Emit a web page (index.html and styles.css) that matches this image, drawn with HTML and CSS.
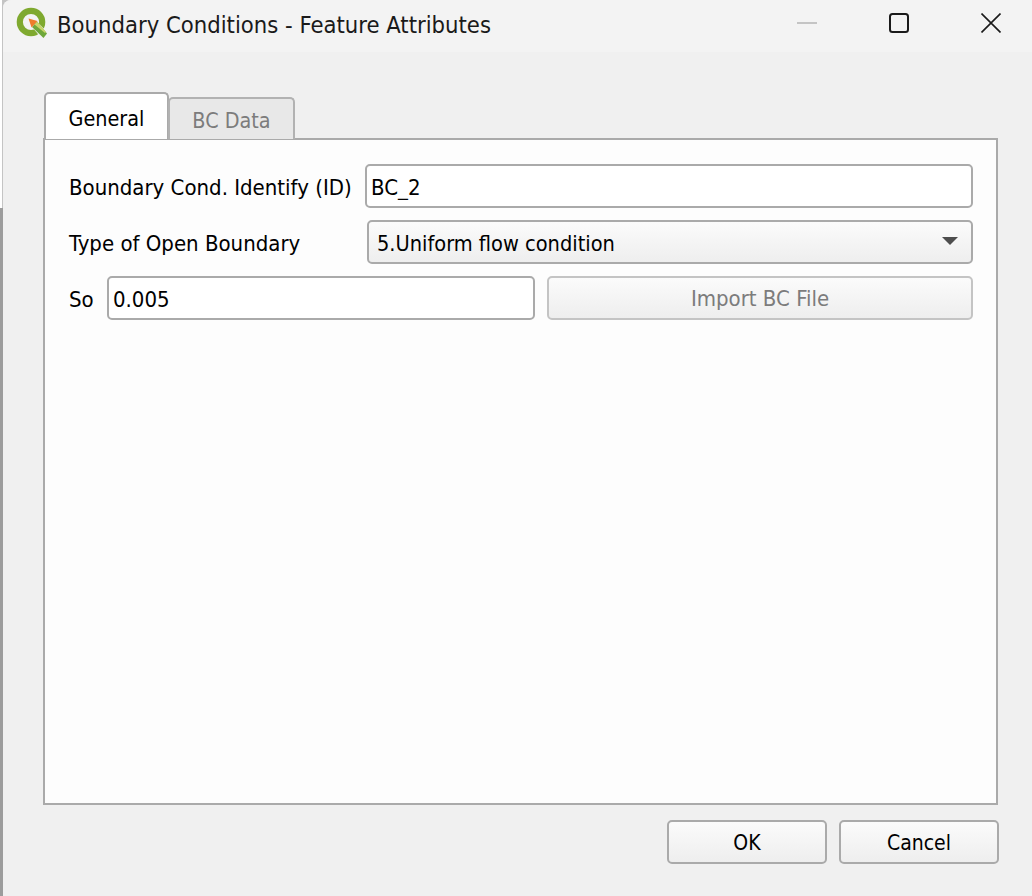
FILE: index.html
```html
<!DOCTYPE html>
<html lang="en">
<head>
    <meta charset="UTF-8">
    <meta name="viewport" content="width=device-width, initial-scale=1.0">
    <title>Boundary Conditions - Feature Attributes</title>
    <link rel="stylesheet" href="styles.css">
</head>
<body>

<div class="window">
    <header class="titlebar">
        <svg class="app-icon" width="32" height="32" viewBox="0 0 32 32">
            <circle cx="15" cy="15" r="11.2" fill="none" stroke="#7fa92f" stroke-width="6.2"/>
            <path d="M16 20 L21 14.5 L33 27 L27 33 Z" fill="#f3f3f3"/>
            <path d="M16 20 L21 14.5 L31 26.5 L27.5 31 Z" fill="#6fa83a"/>
            <path d="M18.5 17.5 L21 14.5 L30 25 L29 26 Z" fill="#c9d56a"/>
            <path d="M12.5 11.5 L21.5 14 L15.5 20.5 Z" fill="#ee7d2b"/>
        </svg>
        <span class="title">Boundary Conditions - Feature Attributes</span>
        <div class="win-controls">
            <svg class="win-btn" width="20" height="20" viewBox="0 0 20 20"><path d="M0 10 H20" stroke="#c4c4c4" stroke-width="2"/></svg>
            <svg class="win-btn" width="20" height="20" viewBox="0 0 20 20"><rect x="1" y="1" width="18" height="18" rx="2.5" fill="none" stroke="#1a1a1a" stroke-width="2"/></svg>
            <svg class="win-btn" width="20" height="20" viewBox="0 0 20 20"><path d="M0.5 0.5 L19.5 19.5 M19.5 0.5 L0.5 19.5" stroke="#1a1a1a" stroke-width="1.6"/></svg>
        </div>
    </header>

    <div class="content">
        <div class="tabs">
            <div class="tab active">General</div>
            <div class="tab">BC Data</div>
        </div>

        <div class="pane">
            <div class="row">
                <label class="label label-id" for="bcId">Boundary Cond. Identify (ID)</label>
                <input class="field" id="bcId" type="text" value="BC_2">
            </div>
            <div class="row">
                <span class="label label-type">Type of Open Boundary</span>
                <div class="combo">
                    <span>5.Uniform flow condition</span>
                    <span class="arrow"></span>
                </div>
            </div>
            <div class="row">
                <label class="label label-so" for="so">So</label>
                <input class="field field-so" id="so" type="text" value="0.005">
                <button class="btn import" disabled>Import BC File</button>
            </div>
        </div>

        <div class="actions">
            <button class="btn action">OK</button>
            <button class="btn action">Cancel</button>
        </div>
    </div>
</div>

</body>
</html>
```

FILE: styles.css
```css
* {
    box-sizing: border-box;
}
html, body {
    margin: 0;
    padding: 0;
    height: 100%;
}
body {
    font-family: "DejaVu Sans Condensed", "DejaVu Sans", Arial, sans-serif;
    font-stretch: condensed;
    font-size: 22px;
    color: #000;
    overflow: hidden;
    background-color: #9c9c9c;
    background-image: linear-gradient(to right, #ffffff 2px, #c4c4c4 2px);
    background-size: 100% 208px;
    background-repeat: no-repeat;
}
.window {
    margin-left: 3px;
    height: 896px;
    background-color: #f0f0f0;
    border-top-left-radius: 8px;
    display: flex;
    flex-direction: column;
}
.titlebar {
    height: 52px;
    flex-shrink: 0;
    background-color: #f3f3f3;
    border-top-left-radius: 8px;
    display: flex;
    align-items: center;
    padding-left: 13px;
}
.app-icon {
    margin-right: 10px;
    margin-top: -6px;
}
.title {
    font-size: 23.6px;
    color: #1a1a1a;
    margin-top: -3px;
    margin-left: -1px;
}
.win-controls {
    margin-left: auto;
    display: flex;
    align-items: center;
    gap: 72px;
    padding-right: 31px;
    margin-top: -6px;
}
.content {
    flex: 1;
    padding: 41px 33px 0 41px;
}
.tabs {
    display: flex;
    align-items: flex-end;
    height: 46px;
    margin-bottom: -1px;
    position: relative;
    z-index: 1;
    font-size: 21.4px;
}
.tab {
    width: 127px;
    height: 42px;
    border: 2px solid #b2b2b2;
    border-bottom: 0;
    border-radius: 5px 5px 0 0;
    background-color: #e8e8e8;
    color: #7c7c7c;
    text-align: center;
    line-height: 44px;
    margin-left: -1px;
}
.tab.active {
    width: 125px;
    height: 47px;
    margin-left: 0;
    background-color: #fff;
    border-color: #aaa;
    color: #000;
    line-height: 49px;
}
.pane {
    width: 955px;
    height: 667px;
    margin-left: -1px;
    background-color: #fdfdfd;
    border: 2px solid #aaa;
    padding: 24px 23px 0 24px;
    display: flex;
    flex-direction: column;
    gap: 12px;
}
.row {
    display: flex;
    height: 44px;
    align-items: stretch;
}
.label {
    display: flex;
    align-items: center;
    padding-top: 2px;
}
.label-id {
    width: 296px;
}
.label-type {
    width: 298px;
}
.label-so {
    width: 38px;
}
.field {
    flex: 1;
    min-width: 0;
    border: 2px solid #aaa;
    border-radius: 5px;
    background-color: #fff;
    font: inherit;
    color: #000;
    padding: 2px 4px 0;
    outline: none;
}
.field-so {
    flex: none;
    width: 428px;
}
.combo {
    flex: 1;
    border: 2px solid #aaa;
    border-radius: 5px;
    background: linear-gradient(#fbfbfb, #eeeeee);
    display: flex;
    align-items: center;
    justify-content: space-between;
    padding: 2px 13px 0 8px;
    font-size: 21.6px;
}
.arrow {
    width: 0;
    height: 0;
    border-left: 8px solid transparent;
    border-right: 8px solid transparent;
    border-top: 8px solid #4d4d4d;
    margin-top: -5px;
}
.btn {
    font: inherit;
    color: #000;
    border: 2px solid #aaa;
    border-radius: 5px;
    background: linear-gradient(#fbfbfb, #eeeeee);
    padding: 1px 0 0;
}
.import {
    flex: none;
    width: 426px;
    margin-left: 12px;
    border-color: #c4c4c4;
    color: #7c7c7c;
}
.actions {
    display: flex;
    justify-content: flex-end;
    gap: 12px;
    width: 955px;
    margin-top: 15px;
}
.action {
    width: 160px;
    height: 44px;
    font-size: 21px;
}
```
